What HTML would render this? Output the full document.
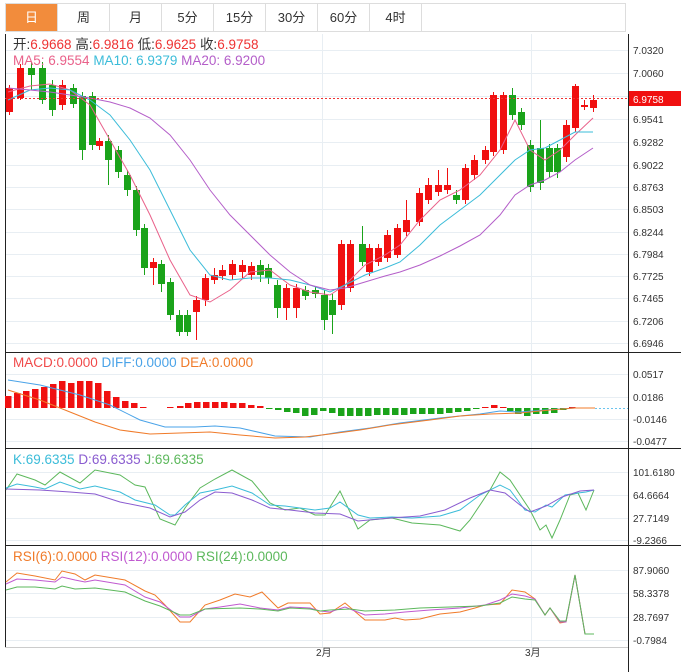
<!DOCTYPE html>
<html><head><meta charset="utf-8"><style>
body{margin:0;width:681px;height:672px;background:#fff;font-family:"Liberation Sans","Noto Sans CJK SC",sans-serif;overflow:hidden;position:relative}
.tabs{position:absolute;left:5px;top:3px;height:27px;width:620px;border:1px solid #ddd;border-right:none;display:flex;background:#fff}
.tabs div{width:52px;border-right:1px solid #ddd;text-align:center;line-height:27px;font-size:13px;color:#333;box-sizing:border-box}
.tabs div.on{background:#f28c3c;color:#fff}
svg{position:absolute;left:0;top:0}
text{font-family:"Liberation Sans","Noto Sans CJK SC",sans-serif}
</style></head><body>
<div class="tabs"><div class="on">日</div><div>周</div><div>月</div><div>5分</div><div>15分</div><div>30分</div><div>60分</div><div>4时</div><div style="width:204px"></div></div>
<svg id="s" width="681" height="672" xmlns="http://www.w3.org/2000/svg">
<g stroke="#e8eef3" stroke-width="1">
<line x1="5" y1="50.5" x2="628" y2="50.5"/><line x1="5" y1="73.5" x2="628" y2="73.5"/><line x1="5" y1="96.5" x2="628" y2="96.5"/><line x1="5" y1="119.5" x2="628" y2="119.5"/><line x1="5" y1="142.5" x2="628" y2="142.5"/><line x1="5" y1="165.5" x2="628" y2="165.5"/><line x1="5" y1="187.5" x2="628" y2="187.5"/><line x1="5" y1="209.5" x2="628" y2="209.5"/><line x1="5" y1="232.5" x2="628" y2="232.5"/><line x1="5" y1="254.5" x2="628" y2="254.5"/><line x1="5" y1="276.5" x2="628" y2="276.5"/><line x1="5" y1="298.5" x2="628" y2="298.5"/><line x1="5" y1="321.5" x2="628" y2="321.5"/><line x1="5" y1="343.5" x2="628" y2="343.5"/>
<line x1="5" y1="374.5" x2="628" y2="374.5"/><line x1="5" y1="397.5" x2="628" y2="397.5"/><line x1="5" y1="419.5" x2="628" y2="419.5"/><line x1="5" y1="441.5" x2="628" y2="441.5"/>
<line x1="5" y1="472.5" x2="628" y2="472.5"/><line x1="5" y1="495.5" x2="628" y2="495.5"/><line x1="5" y1="518.5" x2="628" y2="518.5"/><line x1="5" y1="540.5" x2="628" y2="540.5"/>
<line x1="5" y1="570.5" x2="628" y2="570.5"/><line x1="5" y1="593.5" x2="628" y2="593.5"/><line x1="5" y1="617.5" x2="628" y2="617.5"/><line x1="5" y1="640.5" x2="628" y2="640.5"/>
<line x1="322.5" y1="34" x2="322.5" y2="647"/><line x1="531.5" y1="34" x2="531.5" y2="647"/>
</g>
<g stroke="#222" stroke-width="1">
<line x1="628.5" y1="34" x2="628.5" y2="672"/>
<line x1="5.5" y1="34" x2="5.5" y2="647"/>
<line x1="5" y1="352.5" x2="681" y2="352.5"/><line x1="5" y1="448.5" x2="681" y2="448.5"/><line x1="5" y1="545.5" x2="681" y2="545.5"/>
<line x1="5" y1="647.5" x2="628" y2="647.5" stroke="#ccc"/>
</g>
<g id="g"></g>
<line x1="5" y1="98.5" x2="628" y2="98.5" stroke="#e33" stroke-dasharray="2,2"/>
<line x1="595" y1="408.5" x2="628" y2="408.5" stroke="#6bc4ee" stroke-dasharray="2,2"/>
<rect x="629" y="91" width="52" height="15" fill="#f01010"/>
<text x="633" y="103" font-size="10" fill="#fff">6.9758</text>
<g font-size="10" fill="#333">
<text x="633" y="54">7.0320</text><text x="633" y="77">7.0060</text><text x="633" y="123">6.9541</text><text x="633" y="146">6.9282</text><text x="633" y="169">6.9022</text><text x="633" y="191">6.8763</text><text x="633" y="213">6.8503</text><text x="633" y="236">6.8244</text><text x="633" y="258">6.7984</text><text x="633" y="280">6.7725</text><text x="633" y="302">6.7465</text><text x="633" y="325">6.7206</text><text x="633" y="347">6.6946</text>
<text x="633" y="378">0.0517</text><text x="633" y="401">0.0186</text><text x="633" y="423">-0.0146</text><text x="633" y="445">-0.0477</text>
<text x="633" y="476">101.6180</text><text x="633" y="499">64.6664</text><text x="633" y="522">27.7149</text><text x="633" y="544">-9.2366</text>
<text x="633" y="574">87.9060</text><text x="633" y="597">58.3378</text><text x="633" y="621">28.7697</text><text x="633" y="644">-0.7984</text>
<text x="316" y="656">2月</text><text x="525" y="656">3月</text>
</g>
<g font-size="13.5">
<text x="13" y="49"><tspan fill="#333">开:</tspan><tspan fill="#e33">6.9668 </tspan><tspan fill="#333">高:</tspan><tspan fill="#e33">6.9816 </tspan><tspan fill="#333">低:</tspan><tspan fill="#e33">6.9625 </tspan><tspan fill="#333">收:</tspan><tspan fill="#e33">6.9758</tspan></text>
<text x="13" y="65"><tspan fill="#e9618a">MA5: 6.9554 </tspan><tspan fill="#3bbcd9">MA10: 6.9379 </tspan><tspan fill="#b45ec9">MA20: 6.9200</tspan></text>
<text x="13" y="367"><tspan fill="#f04a4a">MACD:0.0000 </tspan><tspan fill="#4aa3e8">DIFF:0.0000 </tspan><tspan fill="#f07b2a">DEA:0.0000</tspan></text>
<text x="13" y="464"><tspan fill="#3bbcd9">K:69.6335 </tspan><tspan fill="#8a5cd0">D:69.6335 </tspan><tspan fill="#5cb85c">J:69.6335</tspan></text>
<text x="13" y="561"><tspan fill="#f07b2a">RSI(6):0.0000 </tspan><tspan fill="#c05ad0">RSI(12):0.0000 </tspan><tspan fill="#5cb85c">RSI(24):0.0000</tspan></text>
</g>
</svg>
<script>
var C=[[9,'r',88,112,85,115],[20,'r',68,98,64,100],[31,'g',68,75,62,90],[42,'g',68,100,62,104],[52,'g',85,110,80,116],[62,'r',85,105,80,110],[73,'g',88,104,84,108],[82,'g',96,150,92,160],[92,'g',96,145,92,150],[99,'r',141,146,138,150],[108,'g',141,160,135,185],[118,'g',150,172,146,178],[127,'g',175,190,170,196],[136,'g',190,230,186,236],[144,'g',228,268,224,275],[153,'r',262,268,258,285],[161,'g',264,284,260,292],[170,'g',282,315,278,320],[179,'g',315,332,310,336],[187,'g',315,332,310,336],[196,'r',300,312,296,340],[205,'r',278,300,274,306],[214,'r',275,280,268,284],[222,'r',270,276,265,280],[232,'r',264,275,260,280],[242,'r',265,272,260,278],[251,'r',266,275,262,280],[260,'g',265,275,260,282],[268,'g',268,278,264,284],[277,'g',285,308,280,318],[286,'r',288,308,284,320],[296,'r',288,308,284,318],[305,'g',290,296,286,300],[315,'g',290,294,286,298],[324,'g',295,320,290,330],[332,'g',300,315,294,334],[341,'r',244,305,240,310],[350,'r',244,288,240,292],[362,'g',244,262,226,266],[369,'r',248,272,244,276],[378,'r',248,262,244,266],[387,'r',235,258,230,262],[397,'r',228,255,224,258],[406,'r',220,232,200,236],[419,'r',193,222,188,226],[428,'r',185,200,178,204],[438,'r',185,192,170,196],[447,'r',185,190,168,194],[456,'g',195,200,190,204],[465,'r',168,200,164,204],[474,'r',160,175,155,180],[485,'r',150,160,146,164],[493,'r',95,152,92,156],[503,'r',95,150,92,154],[512,'g',95,115,88,120],[521,'g',112,125,108,130],[530,'g',145,187,140,192],[540,'g',148,183,120,190],[549,'g',148,172,144,178],[557,'g',148,172,144,178],[566,'r',125,157,120,162],[575,'r',86,128,84,132],[584,'r',105,107,100,110],[593,'r',100,108,95,112]];
var h='';
C.forEach(function(c){var col=c[1]=='r'?'#f01010':'#1aa31a';h+='<line x1="'+(c[0]+.5)+'" y1="'+c[4]+'" x2="'+(c[0]+.5)+'" y2="'+c[5]+'" stroke="'+col+'"/>';h+='<rect x="'+(c[0]-3)+'" y="'+c[2]+'" width="7" height="'+Math.max(2,c[3]-c[2])+'" fill="'+col+'"/>';});
function pl(p,col){return '<polyline fill="none" stroke="'+col+'" stroke-width="1" points="'+p+'"/>';}
h+=pl('8,92 30,86 50,84 70,90 90,105 110,140 130,175 150,215 170,260 190,295 210,302 230,290 250,272 270,270 290,285 310,292 330,295 345,285 365,265 385,255 400,245 420,220 440,200 460,190 480,175 500,150 515,120 530,150 545,160 560,150 575,135 593,118','#e9618a');
h+=pl('8,100 30,90 50,88 70,90 90,100 110,115 130,140 150,170 170,210 190,250 210,275 230,280 250,278 270,278 290,280 310,285 330,292 345,285 365,275 385,268 400,262 420,245 440,225 460,210 480,195 500,175 515,160 530,150 545,148 560,140 575,132 593,132','#3bbcd9');
h+=pl('8,88 30,90 50,92 70,95 90,98 110,102 130,108 150,118 170,135 190,160 210,190 230,215 250,235 270,255 290,272 310,285 330,290 345,288 365,282 385,276 400,272 420,265 440,256 460,246 480,235 500,215 515,195 530,185 545,180 560,172 575,160 593,148','#b45ec9');
var mh=[[8,12],[17,15],[26,17],[35,19],[44,21],[53,24],[62,27],[71,25],[80,27],[89,27],[98,25],[107,17],[116,11],[125,7],[134,5],[143,1],[170,1],[180,2],[188,5],[197,6],[206,6],[215,6],[224,6],[233,5],[242,5],[251,3],[260,2],[269,-1],[278,-2],[287,-4],[296,-5],[305,-8],[314,-7],[323,-3],[332,-5],[341,-8],[350,-8],[359,-8],[368,-8],[377,-7],[386,-7],[395,-7],[404,-7],[413,-6],[422,-6],[431,-6],[440,-6],[449,-5],[458,-4],[467,-3],[476,-1],[485,1],[494,3],[503,1],[510,-3],[518,-6],[527,-8],[536,-6],[545,-6],[554,-5],[563,-2],[572,1]];
mh.forEach(function(m){var y=m[1]>0?408-m[1]:408;h+='<rect x="'+(m[0]-3)+'" y="'+y+'" width="6.5" height="'+Math.abs(m[1])+'" fill="'+(m[1]>0?'#f01010':'#1aa31a')+'"/>';});
h+=pl('8,380 40,385 80,395 110,405 140,420 165,427 195,427 215,426 240,428 275,436 310,437 340,432 370,428 400,423 440,418 480,414 500,411 520,412 545,410 575,408 595,408','#4aa3e8');
h+=pl('8,390 40,400 70,412 95,422 120,430 150,434 180,433 210,432 240,435 275,438 305,437 330,434 360,430 390,425 430,420 460,416 490,414 520,413 550,410 575,408 595,408','#f07b2a');
h+=pl('6,490 17,474 35,480 45,485 60,472 80,483 95,470 120,475 135,485 145,487 160,519 175,525 185,508 200,488 215,479 232,470 252,481 270,503 285,510 300,508 315,515 325,515 340,491 358,529 370,520 392,518 412,523 440,525 460,531 470,520 490,490 500,472 510,480 530,510 540,530 546,525 552,538 560,520 570,495 578,493 586,510 594,490','#5cb85c');
h+=pl('6,488 17,484 35,487 45,489 60,482 80,489 95,486 120,492 135,500 155,505 170,515 175,515 185,505 200,493 215,490 232,486 252,493 270,505 285,506 300,508 315,510 330,508 340,502 358,515 370,518 392,517 412,518 440,516 460,510 480,495 500,485 510,490 525,510 535,512 546,505 552,507 565,495 578,493 586,492 594,490','#3bbcd9');
h+=pl('6,489 40,490 70,492 95,494 120,502 150,508 170,517 185,512 200,500 215,492 232,493 252,500 270,508 290,510 315,513 340,514 358,521 390,518 420,516 445,510 470,498 490,490 505,493 520,505 530,512 546,506 562,497 580,491 594,490','#8a5cd0');
h+=pl('6,582 17,573 35,576 55,580 62,571 75,574 85,580 95,575 125,580 145,591 155,595 165,605 180,622 190,622 205,605 220,600 235,594 250,597 262,592 278,608 288,603 310,603 320,614 330,613 345,603 365,620 385,620 395,618 405,620 420,619 440,614 460,612 475,608 485,605 500,604 512,590 525,592 535,599 545,615 550,608 560,623 566,622 575,575 585,634 594,634','#f07b2a');
h+=pl('6,584 17,579 35,580 55,582 62,577 75,580 85,582 95,580 125,585 145,597 160,602 180,617 190,617 205,609 220,607 240,604 260,608 278,610 290,607 310,608 320,611 330,612 345,607 365,615 385,614 405,612 430,610 460,608 485,605 500,600 512,594 525,596 535,599 545,615 550,608 560,622 566,622 575,575 585,634 594,634','#c05ad0');
h+=pl('6,590 17,587 35,587 55,589 62,586 75,589 95,588 125,592 145,601 160,606 180,615 190,615 205,609 240,608 260,609 278,611 290,608 310,609 320,611 330,610 350,609 365,611 395,610 420,608 450,607 480,606 500,603 512,597 525,599 535,600 545,615 550,608 560,621 566,621 575,575 585,634 594,634','#5cb85c');
document.getElementById('g').innerHTML=h;
</script>
</body></html>
